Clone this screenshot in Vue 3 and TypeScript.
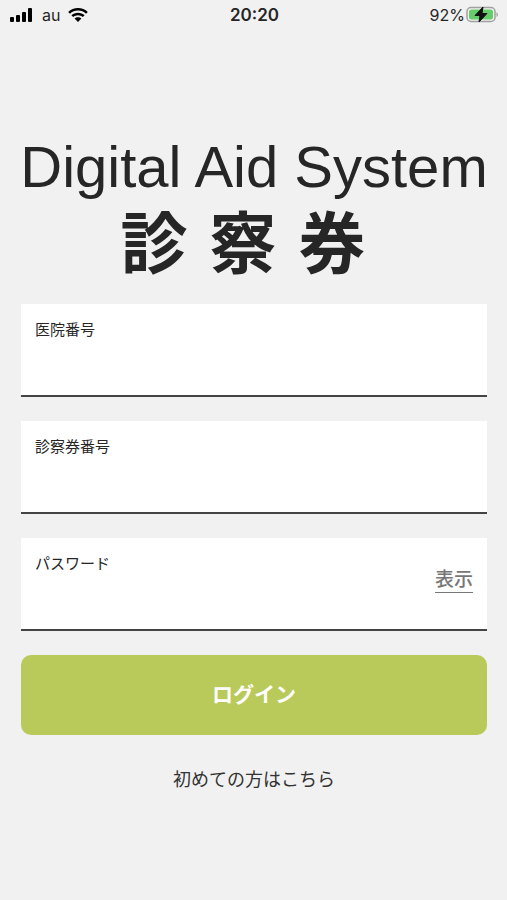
<script setup lang="ts">
import { ref } from 'vue'

const clinic = ref('')
const card = ref('')
const password = ref('')
const visible = ref(false)
</script>

<template>
  <div class="screen">
    <header class="status">
      <div class="side">
        <svg class="signal" viewBox="0 0 24 14" aria-hidden="true">
          <rect x="0" y="9" width="4" height="5" rx="1" />
          <rect x="6" y="7" width="4" height="7" rx="1" />
          <rect x="12" y="4" width="4" height="10" rx="1" />
          <rect x="18" y="0" width="4" height="14" rx="1" />
        </svg>
        <span>au</span>
        <svg class="wifi" viewBox="0 0 20 15" aria-hidden="true">
          <path d="M10 0C6.200 0 2.700 1.500 0.200 3.900L2 5.800C4.100 3.800 6.900 2.600 10 2.600S15.900 3.800 18 5.800L19.800 3.900C17.300 1.500 13.800 0 10 0Z" />
          <path d="M10 4.700C7.400 4.700 5.100 5.700 3.400 7.300L5.200 9.100C6.500 7.900 8.100 7.200 10 7.200S13.500 7.900 14.800 9.100L16.600 7.300C14.900 5.700 12.600 4.700 10 4.700Z" />
          <path d="M10 9.300C8.700 9.300 7.500 9.800 6.600 10.600L10 14L13.400 10.600C12.500 9.800 11.300 9.300 10 9.300Z" />
        </svg>
      </div>
      <time class="clock">20:20</time>
      <div class="side right">
        <span>92%</span>
        <svg class="battery" viewBox="0 0 34 18" aria-hidden="true">
          <rect x="2" y="1.500" width="28" height="14" rx="4" fill="#f1f1f1" stroke="#a0a0a0" stroke-width="1.500" />
          <rect x="4" y="3.500" width="24" height="10" rx="2.500" fill="#65ce69" />
          <path d="M31.500 6Q33 7 33 8.500T31.500 11Z" fill="#a0a0a0" />
          <path d="M18 1L10 9.500H15L14 16L22 7.500H17Z" fill="#111" stroke="#111" />
        </svg>
      </div>
    </header>
    <main>
      <h1><span class="brand">Digital Aid System</span><span class="title">診察券</span></h1>
      <form @submit.prevent>
        <div class="field">
          <label for="clinic">医院番号</label>
          <input id="clinic" v-model="clinic" type="text">
        </div>
        <div class="field">
          <label for="card">診察券番号</label>
          <input id="card" v-model="card" type="text">
        </div>
        <div class="field">
          <label for="password">パスワード</label>
          <input id="password" v-model="password" :type="visible ? 'text' : 'password'">
          <button class="show" type="button" @click="visible = !visible">表示</button>
        </div>
        <button class="login" type="submit">ログイン</button>
      </form>
      <a class="first" href="#">初めての方はこちら</a>
    </main>
  </div>
</template>

<style>
body { background: #f1f1f1; }
</style>

<style scoped>
.screen {
  min-height: 100vh;
  box-sizing: border-box;
  background: #f1f1f1;
  color: #262626;
  font-family: "Liberation Sans", "Noto Sans CJK JP", sans-serif;
}
.status {
  display: grid;
  grid-template-columns: 1fr auto 1fr;
  align-items: center;
  height: 30px;
  padding: 0 8px 0 10px;
  font: 16px/30px Inter, sans-serif;
}
.side { display: flex; align-items: center; gap: 8px; }
.right { justify-content: flex-end; gap: 0; }
.signal { width: 24px; height: 14px; }
.wifi { width: 20px; height: 15px; }
.battery { width: 34px; height: 18px; }
.clock { font-weight: 600; font-size: 17px; }
main { padding: 103px 20px 0 21px; }
h1 {
  display: flex;
  flex-direction: column;
  align-items: center;
  margin: 0;
  white-space: nowrap;
}
.brand { font-size: 58px; line-height: 68px; font-weight: 400; }
.title { display: block; font-size: 67px; line-height: 88px; font-weight: 700; letter-spacing: 22px; }
form { display: flex; flex-direction: column; gap: 24px; margin-top: 15px; }
.field {
  position: relative;
  box-sizing: border-box;
  height: 93px;
  background: #fff;
  border-bottom: 2px solid #444;
}
label { position: absolute; left: 14px; top: 15px; font-size: 15px; line-height: 22px; }
input {
  box-sizing: border-box;
  width: 100%;
  height: 100%;
  padding: 36px 80px 8px 14px;
  border: 0;
  outline: 0;
  background: transparent;
  font-size: 18px;
}
button { font-family: inherit; cursor: pointer; }
.show {
  position: absolute;
  right: 14px;
  top: 30px;
  padding: 0;
  border: 0;
  border-bottom: 1px solid #777;
  background: none;
  color: #777;
  font-size: 19px;
  line-height: 24px;
  font-weight: 500;
}
.login {
  height: 80px;
  padding: 0 0 4px;
  border: 0;
  border-radius: 10px;
  background: #b9ca5a;
  color: #fff;
  font-size: 21px;
  font-weight: 700;
}
.first {
  display: block;
  margin-top: 32px;
  color: #333;
  font-size: 18px;
  line-height: 26px;
  text-align: center;
  text-decoration: none;
}
</style>
